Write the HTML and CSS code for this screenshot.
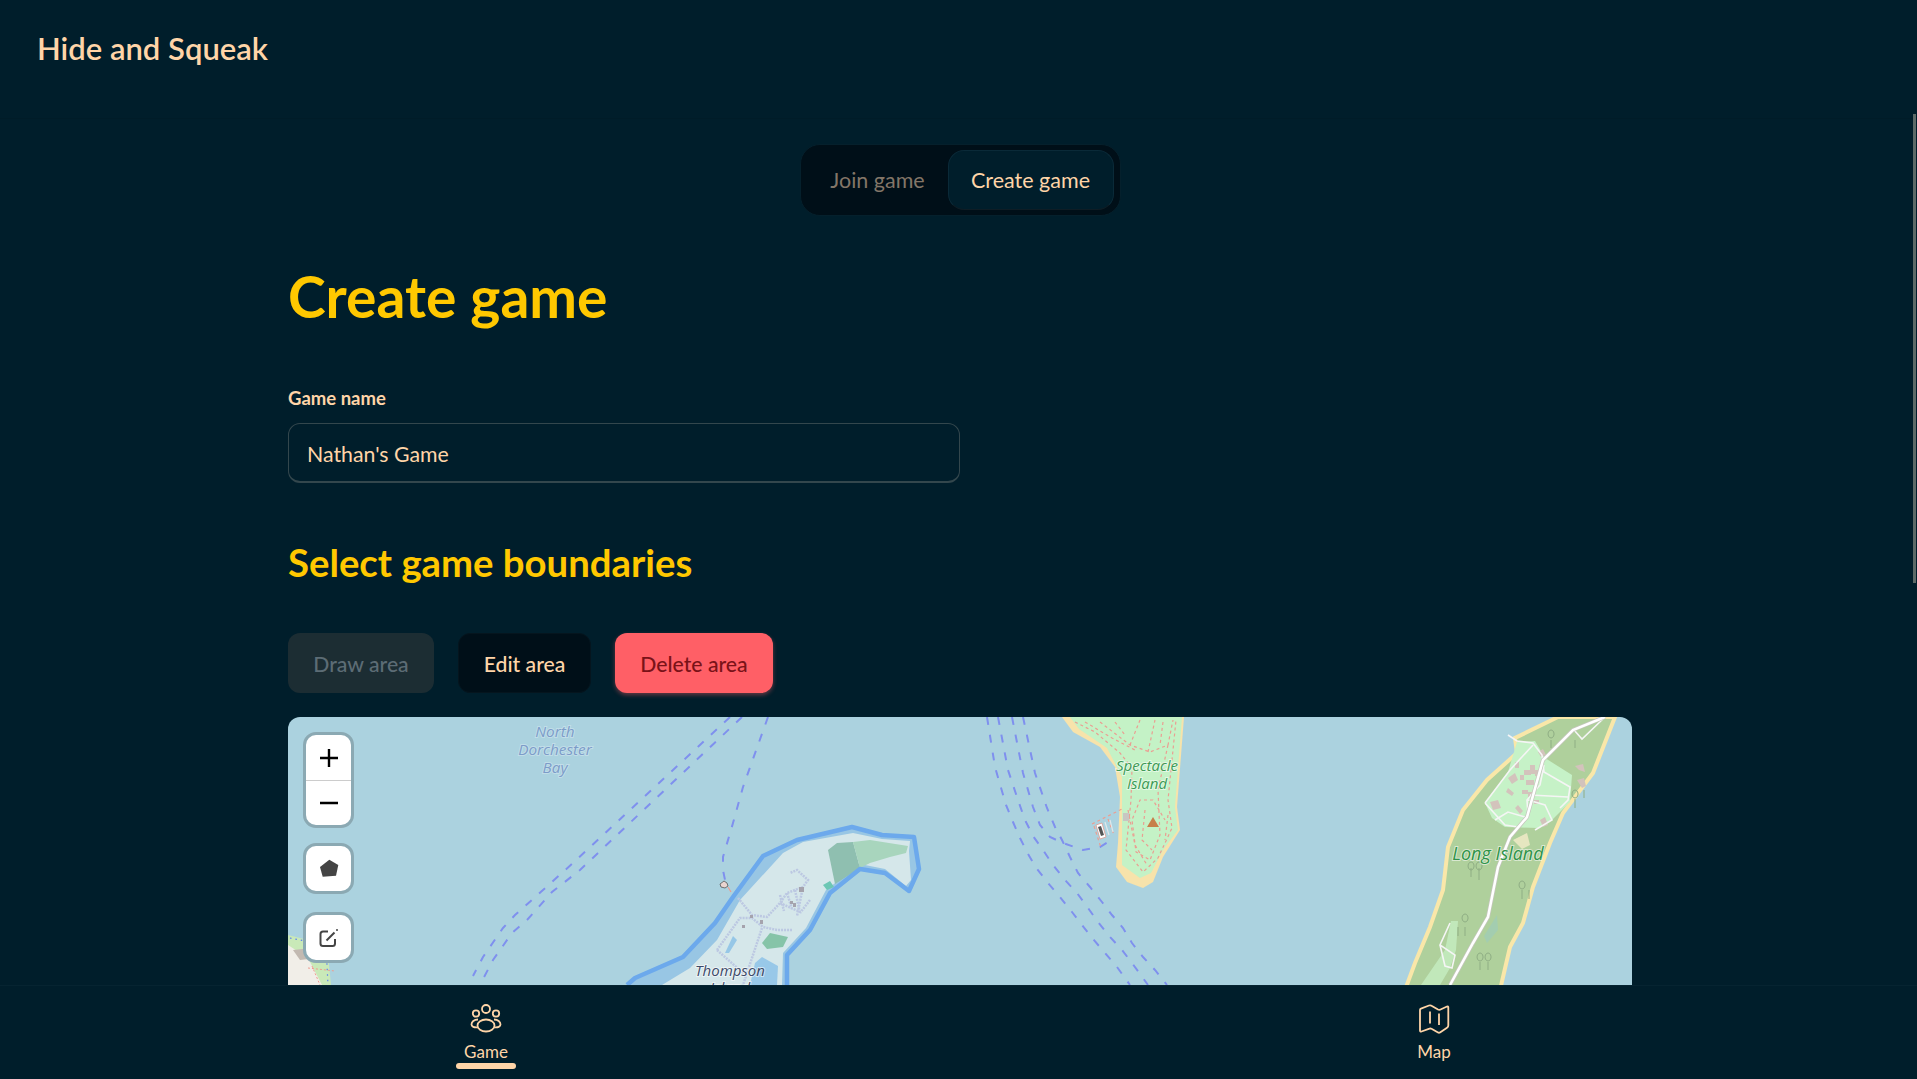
FILE: index.html
```html
<!DOCTYPE html>
<html>
<head>
<title>Hide and Squeak</title>
<meta name="viewport" content="width=device-width, initial-scale=1">
<link rel="stylesheet" href="styles.css">
</head>
<body>
<header class="topbar">
	<div class="logo">Hide and Squeak</div>
</header>
<div class="thumb"></div>
<main class="page">
	<div class="content">
		<div class="tabs-row">
			<div class="tabs">
				<div class="tab">Join game</div>
				<div class="tab active">Create game</div>
			</div>
		</div>
		<h1>Create game</h1>
		<label class="field-label">Game name</label>
		<input class="field" type="text" value="Nathan's Game">
		<h2>Select game boundaries</h2>
		<div class="actions">
			<button class="btn disabled">Draw area</button>
			<button class="btn dark">Edit area</button>
			<button class="btn danger">Delete area</button>
		</div>
		<div class="map">
			<svg class="tiles" viewBox="288 717 1344 268" width="1344" height="268">
				<defs>
					<filter id="soft"><feGaussianBlur stdDeviation="0.45"/></filter>
				</defs>
				<rect x="288" y="717" width="1344" height="268" fill="#abd2df"/>
				<g filter="url(#soft)">
					<!-- shore under the buttons -->
					<path d="M288 935L300 938L327 945L331 985L288 985Z" fill="#c9e9b8"/>
					<path d="M288 945L308 958L322 985L288 985Z" fill="#f1eee8"/>
					<path d="M293 950L312 948L318 958L300 960Z" fill="#c2b9b1"/>
					<path d="M290 938L326 945L328 985" fill="none" stroke="#5a7ff0" stroke-width="1.200" stroke-dasharray="1.500 4"/>
					<path d="M308 968L335 971M312 966L320 985" fill="none" stroke="#ef9c90" stroke-width="1" stroke-dasharray="2 2"/>

					<!-- ferry lines -->
					<g class="ferry">
						<path d="M730 717L573 863L543 890L515 915L503 928L483 957L473 976"/>
						<path d="M742 717L580 870L552 892L527 920L512 933L493 960L482 981"/>
						<path d="M768 717L743 787L733 823L723 857L723 870L725 880"/>
						<path d="M987 717L995 767L1006 805L1013 822L1020 838L1028 854L1037 869L1048 883L1060 897L1072 912L1082 925L1093 939L1105 953L1117 967L1130 985"/>
						<path d="M998 717L1008 770L1019 803L1025 820L1033 836L1043 850L1053 865L1065 880L1077 893L1088 908L1098 922L1110 937L1122 950L1132 963L1148 985"/>
						<path d="M1012 717L1023 773L1033 807L1040 825L1050 837L1063 843L1083 850L1100 847L1108 842"/>
						<path d="M1023 717L1035 773L1047 808L1055 827L1062 840L1070 857L1078 873L1090 887L1102 902L1112 915L1123 928L1132 943L1143 957L1155 970L1167 985"/>
					</g>
					<path d="M724 881l3 2l1 3l-3 2l-4 -1l-1 -3z" fill="#e9d4cf" stroke="#555" stroke-width="0.800"/>
					<path d="M728 887L731 892" stroke="#ef9c90" stroke-width="1.200"/>

					<!-- Thompson Island -->
					<path class="bound-fill" d="M627 985L635 978L683 957L715 923L733 897L763 856L797 840L852 827L882 835L914 837L919 869L909 891L885 873L860 869L830 893L810 930L787 955L787 985Z"/>
					<path d="M662 985L690 968L717 940L740 900L783 853L803 842L853 833L882 839L910 841L909 851L911 880L906 886L885 869L860 864L826 890L806 928L783 953L782 985Z" fill="#d5e7ea"/>
					<path d="M828 850L837 843L853 842L860 868L835 884Z" fill="#8fbfb0"/>
					<path d="M853 842L870 840L908 846L906 853L890 857L870 863L860 868Z" fill="#a8d5bd"/>
					<path d="M823 885L830 881L834 887L827 890Z" fill="#6cc7b4"/>
					<path d="M762 943L770 933L788 937L783 947L767 949Z" fill="#86c4a8"/>
					<path d="M725 953L733 936L737 940L729 953Z" fill="#96c7e7"/>
					<path d="M755 963L762 957L778 966L777 985L750 985Z" fill="#98c8e8"/>
					<g class="campus">
						<path d="M738 898L752 915L767 917L780 903L787 893L803 887L808 880L797 870L790 873"/>
						<path d="M717 950L740 918L752 918L763 927L777 930L792 930"/>
						<path d="M717 950L743 973M762 928L743 985"/>
						<path d="M780 895L784 911M787 893L792 909M795 890L800 913M803 887L797 916M810 900L800 913M780 903L800 912"/>
					</g>
					<path d="M790 901h3v3h-3zM799 887h5v5h-5zM793 903h3v4h-3zM750 915h3v3h-3zM760 920h3v4h-3zM742 925h3v3h-3z" fill="#a5a3ad"/>
					<path class="bound" d="M627 985L635 978L683 957L715 923L733 897L763 856L797 840L852 827L882 835L914 837L919 869L909 891L885 873L860 869L830 893L810 930L787 955L787 985"/>

					<!-- Spectacle Island -->
					<path d="M1062 717L1073 732L1100 747L1115 767L1120 797L1118 843L1116 867L1127 882L1143 888L1153 882L1163 857L1180 830L1177 807L1184 717Z" fill="#f7e3ab"/>
					<path d="M1070 717L1079 729L1107 748L1122 777L1122 843L1122 865L1140 878L1151 873L1163 850L1178 830L1175 807L1182 717Z" fill="#c4f2c6"/>
					<g class="trails">
						<path d="M1075 722L1095 732L1120 753L1132 768L1131 800L1126 850L1143 872L1158 858L1172 828L1168 800L1172 760L1176 720"/>
						<path d="M1100 722L1130 745L1150 752L1168 745L1173 720M1130 745L1140 720M1148 752L1155 720M1168 745L1158 790L1160 835L1150 860L1136 852L1132 820L1140 800L1153 800L1165 820"/>
						<path d="M1085 722L1112 738L1135 750M1115 722L1125 735M1163 722L1160 745M1128 810L1135 845L1147 865M1145 810L1142 840L1152 850M1168 815L1165 840"/>
						<path d="M1092 824L1124 808"/>
						<path d="M1094 826l7 22M1108 819l6 16"/>
					</g>
					<path d="M1096 825l6 -2l4 14l-6 2z" fill="#fff" stroke="#dd9a90" stroke-width="0.800"/>
					<path d="M1098 827l3 -1l3 9l-3 1z" fill="#555"/>
					<path d="M1110 820l3 12M1105 822l4 13" stroke="#dfe7ea" stroke-width="1.200"/>
					<rect x="1123" y="813" width="6" height="8" fill="#c8c6c2"/>
					<path d="M1153 817L1147 827L1159 827Z" fill="#c77f4a"/>

					<!-- Long Island -->
					<path d="M1558 717L1515 738L1517 753L1487 780L1463 810L1448 847L1443 890L1430 927L1415 963L1405 990L1500 990L1510 947L1523 923L1533 887L1550 843L1563 813L1593 773L1615 717Z" fill="#afd09c" stroke="#f9e7a9" stroke-width="4"/>
					<path d="M1485 803L1508 772L1517 742L1535 741L1545 758L1572 775L1570 802L1552 820L1538 828L1505 827L1492 818Z" fill="#c6f2c7"/>
					<path d="M1445 950L1451 921L1458 921L1456 950L1450 968L1440 985L1421 985Z" fill="#c4ecc0" opacity=".85"/>
					<path d="M1484 936L1497 915L1498 930L1487 943Z" fill="#a3cdb0"/>
					<path d="M1513 840L1527 833L1530 845L1522 849Z" fill="#e6e6c0"/>
					<path d="M1508 778l7 -5l3 7l-6 4zM1524 770h7v5h-7zM1530 765h5v9h-5zM1535 770h5v6h-5zM1526 780h8v5h-8zM1508 788l6 5l-2 3l-6 -4zM1522 790h6v4h-6zM1490 802l8 -2l3 8l-8 2zM1518 805l5 6l-3 3l-5 -6zM1540 820l5 -3l3 8l-5 2zM1575 766l8 -2l2 8l-6 -2zM1577 780l7 -2l2 8l-4 2zM1538 752l5 -3l3 6l-5 2zM1515 762h4v6h-4zM1520 775h4v5h-4zM1528 792h5v5h-5zM1534 800h5v4h-5z" fill="#d3c3bc"/>
					<g class="ways">
						<path d="M1508 735L1517 741L1533 743L1542 755L1544 772L1570 787L1568 800L1560 808M1485 803L1510 770L1533 745M1544 765L1540 785L1527 800L1528 815M1530 795L1568 797M1485 803L1505 825L1518 827M1495 820L1508 812L1525 817M1528 800L1545 805L1552 820L1535 830"/>
						<path d="M1574 730L1582 739L1605 717"/>
						<path d="M1450 923L1440 945L1455 955L1452 968L1445 966L1440 945"/>
					</g>
					<path class="road-case" d="M1605 717L1573 730L1543 760L1527 817L1510 837L1498 867L1488 917L1473 943L1450 985"/>
					<path class="road" d="M1605 717L1573 730L1543 760L1527 817L1510 837L1498 867L1488 917L1473 943L1450 985"/>
					<g class="trees">
						<path d="M1471 877v-9m0 -6a3 4 0 1 0 .1 0zM1479 880v-12m0 -6a3 4 0 1 0 .1 0z"/>
						<path d="M1522 899v-9m0 -9a3 4 0 1 0 .1 0zM1529 899v-9"/>
						<path d="M1465 936v-9m0 -13a3 4 0 1 0 .1 0zM1458 936v-9"/>
						<path d="M1480 970v-8m0 -9a3 4 0 1 0 .1 0zM1488 970v-8m0 -9a3 4 0 1 0 .1 0z"/>
						<path d="M1551 748v-8m0 -10a3 4 0 1 0 .1 0zM1575 748v-8"/>
						<path d="M1575 808v-9m0 -9a3 4 0 1 0 .1 0zM1584 798v-8"/>
					</g>
				</g>

				<text class="lbl water" x="555" y="737">North</text>
				<text class="lbl water" x="555" y="755">Dorchester</text>
				<text class="lbl water" x="555" y="773">Bay</text>
				<text class="lbl thompson" x="730" y="976">Thompson</text>
				<text class="lbl thompson" x="730" y="993">Island</text>
				<text class="lbl park" x="1147" y="771">Spectacle</text>
				<text class="lbl park" x="1147" y="789">Island</text>
				<text class="lbl long" x="1498" y="860">Long Island</text>
			</svg>
			<div class="map-controls">
				<div class="ctl-group">
					<div class="ctl ctl-zoom">
						<svg width="20" height="20" viewBox="0 0 20 20"><path d="M10 1v18M1 10h18" stroke="#000" stroke-width="2.400"/></svg>
					</div>
					<div class="ctl ctl-zoom">
						<svg width="20" height="20" viewBox="0 0 20 20"><path d="M1 10h18" stroke="#000" stroke-width="2.400"/></svg>
					</div>
				</div>
				<div class="ctl-group">
					<div class="ctl ctl-tool">
						<svg width="20" height="20" viewBox="0 0 20 20"><path d="M10.300 0.700L19.300 6L17 16.700L3.700 17.700L1 8Z" fill="#444"/></svg>
					</div>
				</div>
				<div class="ctl-group">
					<div class="ctl ctl-tool">
						<svg width="20" height="20" viewBox="0 0 20 20" fill="none" stroke="#444" stroke-width="2"><path d="M9 3.500H4a2.500 2.500 0 0 0 -2.500 2.500v9.500a2.500 2.500 0 0 0 2.500 2.500h9.500a2.500 2.500 0 0 0 2.500 -2.500V11"/><path d="M7.500 12.500L15.500 4.500"/><circle cx="18" cy="2" r="1" fill="#444" stroke="none"/></svg>
					</div>
				</div>
			</div>
		</div>
	</div>
</main>
<nav class="bottom">
	<div class="nav-item on">
		<svg width="32" height="30" viewBox="0 0 32 30" fill="none" stroke="#ffd5a8" stroke-width="1.800">
			<circle cx="16" cy="5" r="4"/>
			<circle cx="6" cy="9.500" r="3.200"/>
			<circle cx="26" cy="9.500" r="3.200"/>
			<ellipse cx="16" cy="21.500" rx="8.500" ry="6"/>
			<path d="M8 15.500C4 15.500 1.500 18 1.500 20.500C1.500 22.500 4 23.800 7.800 23.300M24 15.500C28 15.500 30.500 18 30.500 20.500C30.500 22.500 28 23.800 24.200 23.300"/>
		</svg>
		<span class="nav-text">Game</span>
	</div>
	<div class="nav-item">
		<svg width="32" height="30" viewBox="0 0 32 30" fill="none" stroke="#ffd5a8" stroke-width="1.800" stroke-linejoin="round">
			<path d="M2 6Q2 5 3 4.600L11 1.500Q12.500 1 13.500 1.700L20 5.500Q21 6 22 5.700L29 2.500Q30.300 2 30.300 3.500V21.500Q30.300 23 29 23.700L22 28.500Q21 29 20 28.500L13.500 24.800Q12.500 24.300 11.500 24.700L3.500 27.500Q2 28 2 26.500Z"/>
			<path d="M12 7.500V19.500M21 9.500V21"/>
		</svg>
		<span class="nav-text">Map</span>
	</div>
</nav>
</body>
</html>
```
FILE: styles.css
```css
*{
	box-sizing:border-box;
}
html,body{
	height:100%;
}
body{
	margin:0;
	background-color:#001e2b;
	color:#ffd5a8;
	font-family:"Lato","Open Sans",sans-serif;
	display:flex;
	flex-direction:column;
	overflow:hidden;
	position:relative;
}
.topbar{
	height:119px;
	flex:none;
	padding:27px 0 0 37px;
	border-bottom:1px solid #001c28;
}
.logo{
	font-size:31px;
	line-height:42px;
	font-weight:600;
}
.page{
	flex:1;
	min-height:0;
	overflow:hidden;
}
.thumb{
	position:absolute;
	top:114px;
	right:1px;
	width:3px;
	height:469px;
	background-color:#5c6a68;
}
.content{
	width:1344px;
	margin-left:288px;
	padding-top:25px;
}
.tabs-row{
	display:flex;
	justify-content:center;
}
.tabs{
	display:flex;
	align-items:center;
	height:72px;
	padding:0 6px 0 0;
	background-color:#000f18;
	border:1px solid #05202c;
	border-radius:20px;
}
.tab{
	font-size:21.500px;
	color:#837668;
	padding:0 16px 0 23px;
	height:60px;
	line-height:61px;
	width:147px;
	text-align:center;
	white-space:nowrap;
}
.tab.active{
	color:#ffd5a8;
	width:166px;
	padding:0;
	line-height:59px;
	background-color:#001e2b;
	border:1px solid #0a2a38;
	border-bottom-color:#0e1d25;
	border-radius:16px;
}
h1{
	margin:44px 0 0;
	font-size:57px;
	line-height:72px;
	font-weight:700;
	color:#ffc800;
}
.field-label{
	display:block;
	margin-top:54px;
	font-size:18.500px;
	line-height:24px;
	font-weight:700;
}
.field{
	display:block;
	width:672px;
	height:60px;
	margin-top:13px;
	padding:2px 18px 0;
	background:transparent;
	border:1px solid #33474d;
	border-bottom-width:2px;
	border-radius:12px;
	color:#ffd5a8;
	font-family:inherit;
	font-size:21.300px;
}
h2{
	margin:57px 0 0;
	font-size:38.300px;
	line-height:44px;
	font-weight:700;
	color:#ffc800;
}
.actions{
	display:flex;
	gap:24px;
	margin-top:49px;
}
.btn{
	height:60px;
	padding:2px 0 0;
	border:0;
	border-radius:12px;
	font-family:inherit;
	font-size:21.200px;
	font-weight:500;
}
.btn.disabled{
	width:146px;
	background-color:#1c2d33;
	color:#5c6c75;
}
.btn.dark{
	width:133px;
	background-color:#000f18;
	border:1px solid #05151e;
	color:#ffd5a8;
}
.btn.danger{
	width:158px;
	background-color:#ff5f66;
	color:#7a1218;
	box-shadow:0 2px 4px rgba(255,95,102,.4);
}
.map{
	position:relative;
	height:268px;
	margin-top:24px;
	border-radius:12px 12px 0 0;
	overflow:hidden;
}
.tiles{
	display:block;
}
.ferry path{
	fill:none;
	stroke:#7f90ee;
	stroke-width:2;
	stroke-dasharray:8 10;
}
.bound-fill{
	fill:#98c6e4;
}
.bound{
	fill:none;
	stroke:#6ca9ec;
	stroke-width:4.500;
	stroke-linejoin:round;
}
.campus path{
	fill:none;
	stroke:#bcc8e2;
	stroke-width:2.500;
	stroke-dasharray:2 1;
}
.trails path{
	fill:none;
	stroke:#eb9e92;
	stroke-width:1.200;
	stroke-dasharray:3 3;
}
.ways path{
	fill:none;
	stroke:#f5f5f5;
	stroke-width:1.600;
}
.road-case{
	fill:none;
	stroke:#c5c5bd;
	stroke-width:4;
}
.road{
	fill:none;
	stroke:#fff;
	stroke-width:2.600;
}
.trees path{
	fill:none;
	stroke:#8fae84;
	stroke-width:1;
}
.lbl{
	font-family:"Open Sans",sans-serif;
	font-style:italic;
	text-anchor:middle;
	paint-order:stroke;
	stroke:rgba(255,255,255,.55);
	stroke-width:2px;
}
.lbl.water{
	font-size:15.300px;
	fill:#7c9cc8;
	stroke:rgba(200,225,235,.8);
}
.lbl.thompson{
	font-size:15px;
	fill:#3d4a68;
}
.lbl.park{
	font-size:15px;
	fill:#3d9a55;
}
.lbl.long{
	font-size:18px;
	fill:#2e9348;
}
.map-controls{
	position:absolute;
	top:15px;
	left:15px;
	display:flex;
	flex-direction:column;
	gap:15px;
}
.ctl-group{
	width:51px;
	border:3px solid #8ba9b3;
	border-radius:13px;
	background-color:#fff;
	overflow:hidden;
}
.ctl-group:last-child{
	margin-top:3px;
}
.ctl{
	display:flex;
	align-items:center;
	justify-content:center;
}
.ctl-zoom{
	height:45px;
}
.ctl-zoom + .ctl-zoom{
	border-top:1px solid #ccc;
}
.ctl-tool{
	height:45px;
}
.bottom{
	height:94px;
	flex:none;
	position:relative;
	display:grid;
	grid-template-columns:948px 948px;
	padding-left:12px;
	background-color:#001e2b;
	border-top:1px solid #062431;
}
.nav-item{
	display:flex;
	flex-direction:column;
	align-items:center;
	padding-top:18px;
	position:relative;
}
.nav-text{
	font-size:17px;
	line-height:22px;
	margin-top:7px;
}
.nav-item.on::after{
	content:'';
	position:absolute;
	left:50%;
	top:77px;
	width:60px;
	height:6px;
	margin-left:-30px;
	border-radius:3px;
	background-color:#ffd5a8;
}
```
